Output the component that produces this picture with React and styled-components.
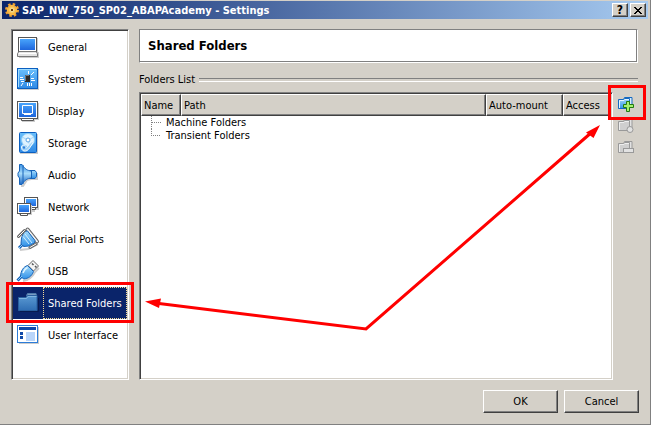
import React, { useState } from 'react';
import styled, { createGlobalStyle, css } from 'styled-components';

const GlobalStyle = createGlobalStyle`
  * {
    box-sizing: border-box;
  }
  body {
    margin: 0;
    background: #d4d0c8;
    color: #000;
    font-family: Tahoma, 'DejaVu Sans Condensed', 'DejaVu Sans', sans-serif;
    font-size: 11px;
    line-height: 13px;
  }
  button {
    font: inherit;
    color: inherit;
  }
`;

const raised = css`
  border: 1px solid;
  border-color: #fff #404040 #404040 #fff;
  box-shadow: inset -1px -1px 0 #808080;
`;

const sunken = css`
  background: #fff;
  border: 1px solid;
  border-color: #808080 #fff #fff #808080;
  box-shadow: inset 1px 1px 0 #404040, inset -1px -1px 0 #d4d0c8;
  padding: 1px;
`;

const Window = styled.div`
  position: relative;
  display: flex;
  flex-direction: column;
  min-height: 100vh;
  padding: 1px 1px 0 2px;
  border-right: 1px solid #808080;
  border-bottom: 1px solid #808080;
`;

const TitleBar = styled.header`
  display: flex;
  align-items: center;
  height: 18px;
  margin-right: 1px;
  padding: 0 2px 0 3px;
  color: #fff;
  background: linear-gradient(to right, #0a246a, #a6caf0);
`;

const TitleText = styled.h1`
  flex: 1;
  margin: 0 0 0 3px;
  font-size: 11px;
  font-weight: bold;
  white-space: nowrap;
`;

const CaptionButton = styled.button`
  ${raised}
  display: flex;
  align-items: center;
  justify-content: center;
  width: 16px;
  height: 14px;
  margin-left: 2px;
  padding: 0;
  color: #000;
  background: #d4d0c8;
  font-size: 12px;
  font-weight: bold;
  line-height: 12px;
`;

const Content = styled.div`
  flex: 1;
  display: flex;
  gap: 10px;
  padding: 10px 10px 10px 9px;
`;

const Sidebar = styled.nav`
  ${sunken}
  flex: none;
  width: 118px;
`;

const NavList = styled.ul`
  margin: 0;
  padding: 0;
  list-style: none;
`;

const NavItem = styled.li`
  position: relative;
`;

const NavButton = styled.button`
  display: flex;
  align-items: stretch;
  width: 100%;
  height: 32px;
  padding: 0;
  border: 0;
  outline: 0;
  text-align: left;
  color: ${({ $active }) => ($active ? '#fff' : '#000')};
  background: ${({ $active }) => ($active ? '#0a246a' : 'transparent')};
`;

const NavIcon = styled.span`
  flex: none;
  width: 30px;
  padding: 5px 4px;
`;

const NavLabel = styled.span`
  flex: 1;
  display: flex;
  align-items: center;
  padding-left: 4px;
  border: 1px dotted ${({ $active }) => ($active ? '#f5db95' : 'transparent')};
  white-space: nowrap;
`;

const Highlight = styled.span`
  position: absolute;
  inset: ${({ $inset }) => $inset};
  z-index: 1;
  border: 3px solid #f00;
  pointer-events: none;
`;

const Main = styled.main`
  flex: 1;
  min-width: 0;
  display: flex;
  flex-direction: column;
  padding-right: 1px;
`;

const PageTitle = styled.h2`
  margin: 0;
  padding: 8px;
  font-size: 13px;
  line-height: 16px;
  font-weight: bold;
  background: #fff;
  border: 1px solid;
  border-color: #808080 #fff #fff #808080;
  box-shadow: inset -1px -1px 0 #808080;
`;

const GroupLabel = styled.div`
  display: flex;
  align-items: center;
  gap: 4px;
  margin: 10px 0 6px;

  &::after {
    content: '';
    flex: 1;
    height: 2px;
    border-top: 1px solid #808080;
    border-bottom: 1px solid #fff;
  }
`;

const Folders = styled.section`
  flex: 1;
  display: flex;
  gap: 5px;
`;

const ListBox = styled.div`
  ${sunken}
  flex: 1;
`;

const Table = styled.table`
  width: 100%;
  table-layout: fixed;
  border-collapse: separate;
  border-spacing: 0;
`;

const HeadCell = styled.th`
  ${raised}
  width: ${({ $width }) => $width || 'auto'};
  height: 22px;
  padding: 1px 2px 0;
  font-weight: normal;
  text-align: left;
  background: #d4d0c8;
`;

const TreeCell = styled.td`
  height: 13px;
  padding: 0 0 0 10px;
`;

const TreeRow = styled.div`
  display: flex;
  align-items: center;
  height: 13px;
  gap: 5px;
`;

const Branch = styled.svg`
  flex: none;
  stroke: #808080;
  stroke-dasharray: 1 1;
  fill: none;
  shape-rendering: crispEdges;
`;

const Tools = styled.div`
  display: flex;
  flex-direction: column;
  gap: 6px;
  width: 20px;
  padding-top: 4px;
`;

const ToolButton = styled.button`
  position: relative;
  height: 16px;
  padding: 0;
  border: 0;
  background: none;
  text-align: left;
`;

const Footer = styled.footer`
  display: flex;
  justify-content: flex-end;
  gap: 6px;
  padding: 0 10px 11px;
`;

const PushButton = styled.button`
  ${raised}
  width: 75px;
  height: 23px;
  padding: 0;
  background: #d4d0c8;
`;

const Arrows = styled.svg`
  position: absolute;
  top: 0;
  left: 0;
  width: 100vw;
  z-index: 2;
  pointer-events: none;
`;

const Icon = styled.svg`
  display: block;
  overflow: visible;
`;

const Gradients = () => (
  <svg width="0" height="0" style={{ position: 'absolute' }} aria-hidden="true">
    <defs>
      <linearGradient id="screen" x1="0" y1="0" x2="0" y2="1">
        <stop offset="0" stopColor="#48a4fc" />
        <stop offset="1" stopColor="#1f66dc" />
      </linearGradient>
      <linearGradient id="chip" x1="0" y1="0" x2="0" y2="1">
        <stop offset="0" stopColor="#6cc0fb" />
        <stop offset="1" stopColor="#2f8ae6" />
      </linearGradient>
      <linearGradient id="sky" x1="0" y1="0" x2="0" y2="1">
        <stop offset="0" stopColor="#a5dcfb" />
        <stop offset="1" stopColor="#2e90e8" />
      </linearGradient>
      <linearGradient id="dusk" x1="0" y1="0" x2="0" y2="1">
        <stop offset="0" stopColor="#5b9ad3" />
        <stop offset="1" stopColor="#2f6eb4" />
      </linearGradient>
      <linearGradient id="cone" x1="0" y1="0" x2="0" y2="1">
        <stop offset="0" stopColor="#3f94e4" />
        <stop offset="0.45" stopColor="#a8dcfb" />
        <stop offset="1" stopColor="#1c68c4" />
      </linearGradient>
      <radialGradient id="gold">
        <stop offset="0" stopColor="#fff0a0" />
        <stop offset="1" stopColor="#f5aa30" />
      </radialGradient>
    </defs>
  </svg>
);

const icons = {
  general: (
    <>
      <path d="M3 2h18v14h1v6H2z" fill="#ccc" />
      <rect x="1.5" y="1.5" width="18" height="14" fill="#fff" stroke="#555" />
      <rect x="3" y="3" width="15" height="11" fill="url(#screen)" />
      <path d="M2 15.5h17l1.500 2v3H.5v-3z" fill="#e4e4e4" stroke="#777" />
      <path d="M2 17.5h17" stroke="#fff" />
    </>
  ),
  system: (
    <>
      <rect x="1" y="1" width="21" height="21" fill="#ccc" />
      <rect x=".5" y=".5" width="20" height="20" fill="url(#chip)" stroke="#0b5fc0" />
      <path d="M1.500 19V1.500H19" fill="none" stroke="#a0dcff" />
      <path d="M11.500 3v3M17 4l-3 3M3 9.500h3M3 11.500h4M4 13.500h3M14 10.500h3M14 12.500h4M4 18l2-3M10.500 15v3M12.500 15v3M14.500 15v3" stroke="#fff" />
      <rect x="8" y="7" width="5" height="7" fill="#2c2c2c" />
      <path d="M8.500 13V7.500H12" fill="none" stroke="#777" />
    </>
  ),
  display: (
    <>
      <path d="M2 3h20v17h-4v2H5v-2H2z" fill="#ccc" />
      <rect x=".5" y="1.500" width="20" height="17" fill="#fff" stroke="#555" />
      <path d="M4.500 18.500h12v2h-12z" fill="#fff" stroke="#555" />
      <rect x="2" y="3" width="17" height="14" fill="url(#screen)" />
      <path d="M5.500 5.500h10v8h-10z" fill="none" stroke="#fff" />
      <path d="M7 14.500h7" stroke="#fff" />
    </>
  ),
  storage: (
    <>
      <rect x="3" y="2" width="18" height="20" fill="#ccc" />
      <rect x="2.500" y=".5" width="17" height="20" rx="1" fill="url(#chip)" stroke="#0b5fc0" />
      <circle cx="11" cy="8" r="6.500" fill="#dff3ff" stroke="#8accf6" />
      <path d="M11 8L5 5M11 8l6-3M11 8l2 6" stroke="#a4d6f8" />
      <circle cx="11" cy="8" r="2" fill="#fff" stroke="#5aa4e4" />
      <path d="M4.500 15c0-2.500 3-2.500 3.500-.5s2 1 4-2l3-3 1 1-3 5c-2 3-4 4-6 3.500S4.500 17 4.500 15z" fill="#9ed2f8" stroke="#f4fbff" />
      <circle cx="7" cy="15.500" r="1.200" fill="#2f80dc" />
    </>
  ),
  audio: (
    <>
      <path d="M4 22h2l4-6 4-1h6v-6" fill="none" stroke="#ccc" strokeWidth="2" />
      <path d="M13 6.500h5l1.500 2v4l-1.500 2h-5z" fill="url(#sky)" stroke="#1763b8" />
      <path d="M5.500 1C8 5 10 6.500 14.500 7v7C10 14.500 8 16 5.500 20z" fill="url(#cone)" stroke="#1763b8" />
      <path d="M2.500.5H5l1 1v18l-1 1H2.500V14L1 12V9l1.500-2z" fill="url(#cone)" stroke="#1763b8" />
    </>
  ),
  network: (
    <>
      <path d="M9 3h13v11h-4v2H9z" fill="#ccc" />
      <rect x="7.500" y="1.500" width="13" height="10" fill="#fff" stroke="#555" />
      <rect x="9" y="3" width="10" height="7" fill="url(#screen)" />
      <path d="M12.500 12v1.500h6V12" fill="#fff" stroke="#555" />
      <path d="M2 9h13v10H2z" fill="#ccc" />
      <rect x=".5" y="7.500" width="13" height="10" fill="#fff" stroke="#555" />
      <rect x="2" y="9" width="10" height="7" fill="url(#screen)" />
      <path d="M3.500 18v1.500h7V18" fill="#fff" stroke="#555" />
    </>
  ),
  serial: (
    <>
      <path d="M3 22l8-1 10-5" fill="none" stroke="#ccc" strokeWidth="2" />
      <path d="M10.500 1.500l9.500 12" stroke="#666" strokeWidth="4" strokeLinecap="round" />
      <path d="M10.500 1.500l9.500 12" stroke="#f4f4f4" strokeWidth="2" strokeLinecap="round" />
      <path d="M7 3.500l3.500-.5L18 12.500l-.5 2.500-5.500 3-5.500.5-2.500-3 .5-5.500z" fill="url(#sky)" stroke="#1763b8" />
      <path d="M8 6l7 9M6 8.500l6 7.500" stroke="#d4f0ff" />
      <path d="M5.500 16.500L2 20" stroke="#1763b8" strokeWidth="3" />
      <path d="M5.500 16.500L2 20" stroke="#8cccf8" />
      <path d="M1.500 8.500l6-6M13 19.500l6-3.500" stroke="#666" strokeWidth="3" strokeLinecap="round" />
      <path d="M1.500 8.500l6-6M13 19.500l6-3.500" stroke="#fff" strokeLinecap="round" />
    </>
  ),
  usb: (
    <>
      <path d="M6 21c6-1 10-5 12-9l4-4" fill="none" stroke="#ccc" strokeWidth="2" />
      <path d="M11 5.500L16 .5 21.500 6l-5 5z" fill="#f4f4f4" stroke="#666" />
      <path d="M15 3.500l1.500 1.500M18 6l1.500 1.500" stroke="#555" strokeWidth="1.500" />
      <path d="M5 16L.5 20.500" stroke="#1763b8" strokeWidth="3" />
      <path d="M10.500 5.500l6 6c-2 5-5 7-10 7.500l-3-3C4 11 6 7 10.500 5.500z" fill="url(#sky)" stroke="#1763b8" />
      <path d="M6 13c1-3 2.500-4.500 4.500-5.500" fill="none" stroke="#e2f5ff" strokeWidth="1.500" />
      <path d="M5 16l-4 4" stroke="#8cccf8" />
    </>
  ),
  folders: (
    <>
      <path d="M9.500 3.500l1-2H19l.5 2z" fill="#7a9cc4" stroke="#4f7cac" />
      <path d="M1.500 18.500v-13H9l1.500-2h9.500v15z" fill="url(#dusk)" stroke="#28609f" />
      <path d="M2 6.500h7.500l1.500-2h8.500" fill="none" stroke="#81b5e0" />
      <path d="M3 19.500h18.500V6" fill="none" stroke="#071b50" />
    </>
  ),
  ui: (
    <>
      <path d="M2 3h20v17H2z" fill="#ccc" />
      <rect x=".5" y="1.500" width="20" height="17" fill="#fff" stroke="#2c7cd8" />
      <path d="M2 3h17v3H2z" fill="#0f48a8" />
      <path d="M3 8h3v3H3zM3 12h3v3H3z" fill="#0f48a8" />
      <rect x="9" y="8" width="9" height="9" fill="#b9d5fa" />
    </>
  ),
};

const categories = [
  { id: 'general', label: 'General' },
  { id: 'system', label: 'System' },
  { id: 'display', label: 'Display' },
  { id: 'storage', label: 'Storage' },
  { id: 'audio', label: 'Audio' },
  { id: 'network', label: 'Network' },
  { id: 'serial', label: 'Serial Ports' },
  { id: 'usb', label: 'USB' },
  { id: 'folders', label: 'Shared Folders', marked: true },
  { id: 'ui', label: 'User Interface' },
];

const columns = [
  { label: 'Name', width: '40px' },
  { label: 'Path' },
  { label: 'Auto-mount', width: '77px' },
  { label: 'Access', width: '48px' },
];

const GearIcon = () => (
  <Icon width="14" height="14" viewBox="0 0 14 14">
    <circle cx="7" cy="7" r="5.500" fill="none" stroke="#f0a030" strokeWidth="3" strokeDasharray="2.300 2.020" />
    <circle cx="7" cy="7" r="4.600" fill="url(#gold)" stroke="#f7b848" strokeWidth="1.200" />
    <circle cx="7" cy="7" r="1.700" fill="#6b3a08" stroke="#fff0b0" strokeWidth=".8" />
  </Icon>
);

const FolderToolIcon = ({ kind }) => {
  const on = kind === 'add';
  const line = on ? '#1468c0' : '#999';
  return (
    <Icon width="16" height="16" viewBox="0 0 16 16">
      <path d="M5.500 3.500l1-2h7.500v10" fill={on ? '#d8eefe' : '#e2e2e2'} stroke={line} />
      <path d="M.5 12.500v-9h5l1-1h5v10z" fill={on ? 'url(#sky)' : '#cfcfcf'} stroke={line} />
      <path d="M1.500 12V4.500H6l1-1h4" fill="none" stroke={on ? '#e4f5ff' : '#eee'} />
      {kind === 'add' && (
        <path d="M8.500 5.500h3v3h4v3h-4v4h-3v-4h-3v-3h3z" fill="#a4f070" stroke="#217a10" />
      )}
      {kind === 'edit' && <circle cx="12" cy="11.500" r="3" fill="#e2e2e2" stroke="#999" />}
      {kind === 'remove' && <rect x="5.500" y="8.500" width="10" height="4" fill="#e2e2e2" stroke="#999" />}
    </Icon>
  );
};

const App = () => {
  const [active, setActive] = useState('folders');

  return (
    <>
      <GlobalStyle />
      <Window>
        <Gradients />
        <TitleBar>
          <GearIcon />
          <TitleText>SAP_NW_750_SP02_ABAPAcademy - Settings</TitleText>
          <CaptionButton aria-label="Help">?</CaptionButton>
          <CaptionButton aria-label="Close">
            <svg width="8" height="7" viewBox="0 0 8 7" shapeRendering="crispEdges">
              <path d="M0 0h2v1h1v1h2V1h1V0h2v1H7v1H6v1H5v1h1v1h1v1h1v1H6V6H5V5H3v1H2v1H0V6h1V5h1V4h1V3H2V2H1V1H0z" />
            </svg>
          </CaptionButton>
        </TitleBar>

        <Content>
          <Sidebar>
            <NavList>
              {categories.map(({ id, label, marked }) => (
                <NavItem key={id}>
                  <NavButton $active={active === id} onClick={() => setActive(id)}>
                    <NavIcon>
                      <Icon width="22" height="22" viewBox="0 0 22 22" fill="none">
                        {icons[id]}
                      </Icon>
                    </NavIcon>
                    <NavLabel $active={active === id}>{label}</NavLabel>
                  </NavButton>
                  {marked && <Highlight $inset="-5px -7px -4px -7px" />}
                </NavItem>
              ))}
            </NavList>
          </Sidebar>

          <Main>
            <PageTitle>Shared Folders</PageTitle>
            <GroupLabel>Folders List</GroupLabel>
            <Folders>
              <ListBox>
                <Table>
                  <thead>
                    <tr>
                      {columns.map(({ label, width }) => (
                        <HeadCell key={label} $width={width}>{label}</HeadCell>
                      ))}
                    </tr>
                  </thead>
                  <tbody>
                    {['Machine Folders', 'Transient Folders'].map((name, index) => (
                      <tr key={name}>
                        <TreeCell colSpan={4}>
                          <TreeRow>
                            <Branch width="10" height="13">
                              <path d={index === 0 ? 'M.5 0v13M.5 6.500h10' : 'M.5 0v6.500h10'} />
                            </Branch>
                            {name}
                          </TreeRow>
                        </TreeCell>
                      </tr>
                    ))}
                  </tbody>
                </Table>
              </ListBox>
              <Tools>
                <ToolButton aria-label="Add folder">
                  <FolderToolIcon kind="add" />
                  <Highlight $inset="-11px -8px -8px -10px" />
                </ToolButton>
                <ToolButton aria-label="Edit folder" disabled>
                  <FolderToolIcon kind="edit" />
                </ToolButton>
                <ToolButton aria-label="Remove folder" disabled>
                  <FolderToolIcon kind="remove" />
                </ToolButton>
              </Tools>
            </Folders>
          </Main>
        </Content>

        <Footer>
          <PushButton>OK</PushButton>
          <PushButton>Cancel</PushButton>
        </Footer>

        <Arrows viewBox="0 0 651 425">
          <path d="M155 303L366 329L592 132" fill="none" stroke="#f00" strokeWidth="3" />
          <path d="M145 301.500L161 298.500L159 308zM600 125L586 132.500L593.500 138z" fill="#f00" />
        </Arrows>
      </Window>
    </>
  );
};

export default App;
